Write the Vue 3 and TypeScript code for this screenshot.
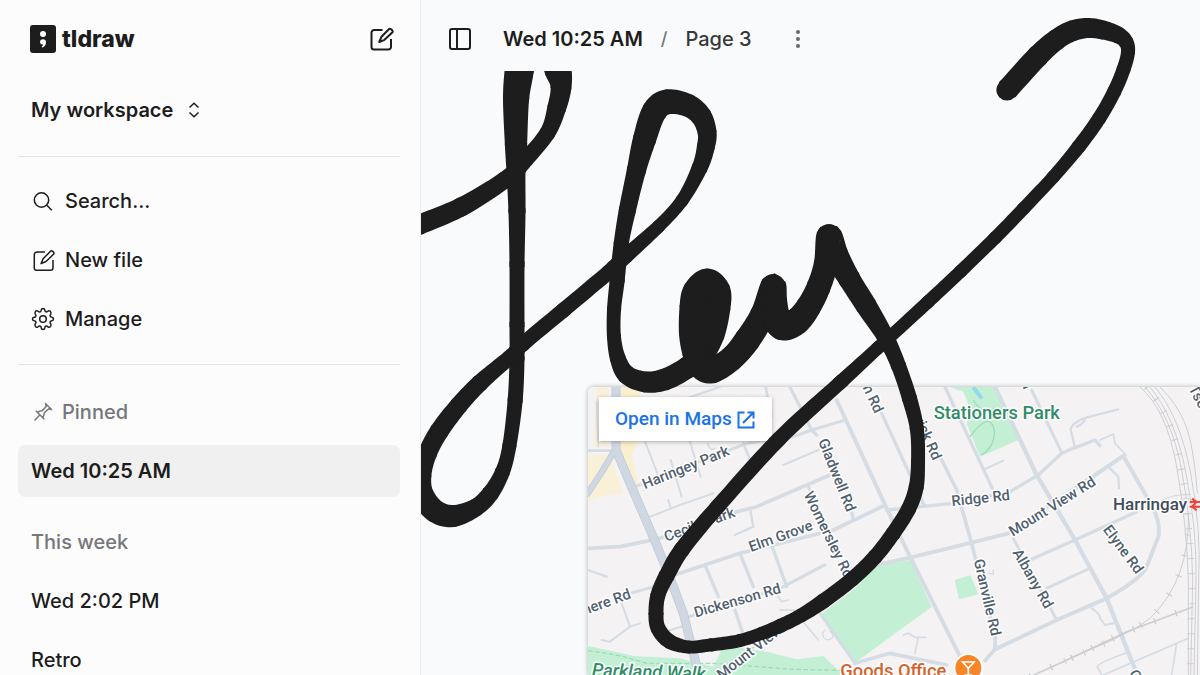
<script setup lang="ts">
type InkPoint = [x: number, y: number, width: number]

interface InkPiece {
  d: string
  x: number
  y: number
  r: number
}

interface Road {
  d: string
  w: number
}

interface StreetLabel {
  text: string
  x: number
  y: number
  angle: number
  anchor?: 'start' | 'middle' | 'end'
}

const recentFiles: string[] = ['Wed 2:02 PM', 'Retro']

const letterH: InkPoint[] = [
  [405, 229, 20], [421, 224, 20], [463, 206, 19], [506, 179, 17], [527, 158, 16], [548, 132, 16],
  [557, 107, 19], [561, 87, 21], [558, 70, 27], [550, 46, 28], [534, 32, 28], [522, 46, 28],
  [519, 72, 29], [516, 100, 26], [516, 147, 22], [516, 172, 19], [517, 213, 17], [517, 267, 15],
  [517, 327, 15], [517, 360, 15], [515, 402, 15], [509, 448, 14], [502, 473, 15], [490, 494, 17],
  [475, 508, 18], [453, 516, 22], [435, 511, 23], [422, 494, 23], [421, 474, 21], [428, 452, 19],
  [440, 430, 19], [460, 404, 18], [481, 382, 17], [510, 357, 15], [524, 343, 15], [566, 308, 15],
  [609, 272, 15],
]

const lettersLey: InkPoint[] = [
  [609, 272, 15], [627, 255, 15], [660, 225, 13], [683, 199, 13], [700, 167, 16], [706, 146, 18],
  [707, 132, 19], [701, 116, 21], [687, 105, 23], [667, 102, 25], [654, 112, 25], [644, 141, 23],
  [636, 172, 19], [627, 212, 17], [621, 245, 15], [617, 282, 15], [614, 310, 14], [614, 337, 14],
  [618, 359, 16], [627, 375, 19], [646, 382, 21], [666, 379, 22], [688, 367, 22], [702, 354, 24],
  [712, 333, 26], [718, 307, 25], [717, 291, 27], [707, 282, 27], [696, 292, 27], [693, 308, 27],
  [693, 333, 28], [696, 353, 27], [702, 367, 26], [713, 370, 26], [732, 358, 25], [748, 339, 26],
  [763, 314, 25], [773, 286, 25], [774, 300, 26], [776, 316, 28], [783, 326, 29], [797, 321, 27],
  [809, 306, 25], [819, 286, 24], [826, 263, 24], [829, 236, 25], [836, 255, 25], [850, 280, 22],
  [867, 307, 21], [886, 338, 17], [899, 367, 15], [910, 400, 15], [917, 430, 14], [918, 463, 14],
  [916, 488, 15], [908, 510, 15], [892, 535, 15], [874, 558, 15], [851, 580, 15], [822, 602, 15],
  [800, 616, 14], [780, 626, 14], [760, 634, 13], [738, 641, 13], [710, 645, 13], [688, 647, 13],
  [669, 641, 15], [658, 628, 15], [656, 613, 15], [658, 595, 15], [667, 575, 16], [683, 548, 16],
  [720, 504, 15], [780, 438, 15], [843, 380, 14], [880, 346, 13], [930, 300, 13], [962, 270, 13],
  [997, 236, 13], [1025, 207, 13], [1055, 175, 13], [1080, 145, 14], [1100, 117, 14], [1115, 90, 14],
  [1124, 68, 14], [1128, 52, 14], [1126, 42, 15], [1118, 35, 17], [1103, 30, 19], [1088, 28, 20],
  [1072, 31, 21], [1056, 40, 21], [1037, 57, 22], [1007, 90, 22],
]

function spline(a: number, b: number, c: number, d: number, t: number): number {
  return (
    0.5 *
    (2 * b + (c - a) * t + (2 * a - 5 * b + 4 * c - d) * t * t + (3 * b - a - 3 * c + d) * t * t * t)
  )
}

// Each piece is the band between two samples, with a disc that rounds its joint.
function inkPieces(points: InkPoint[]): InkPiece[] {
  const steps = 10
  const smooth: InkPoint[] = []
  for (let i = 0; i < points.length - 1; i++) {
    const p0 = points[Math.max(i - 1, 0)]
    const p1 = points[i]
    const p2 = points[i + 1]
    const p3 = points[Math.min(i + 2, points.length - 1)]
    for (let s = 0; s < steps; s++) {
      const t = s / steps
      smooth.push([
        spline(p0[0], p1[0], p2[0], p3[0], t),
        spline(p0[1], p1[1], p2[1], p3[1], t),
        spline(p0[2], p1[2], p2[2], p3[2], t),
      ])
    }
  }
  smooth.push(points[points.length - 1])

  const left: string[] = []
  const right: string[] = []
  smooth.forEach(([x, y, w], i) => {
    const before = smooth[Math.max(i - 1, 0)]
    const after = smooth[Math.min(i + 1, smooth.length - 1)]
    const dx = after[0] - before[0]
    const dy = after[1] - before[1]
    const half = w / 2 / (Math.hypot(dx, dy) || 1)
    left.push(`${(x + dy * half).toFixed(2)} ${(y - dx * half).toFixed(2)}`)
    right.push(`${(x - dy * half).toFixed(2)} ${(y + dx * half).toFixed(2)}`)
  })

  return points.map(([x, y, w], i) => {
    const from = Math.max(i * steps - 1, 0)
    const to = Math.min((i + 1) * steps + 1, smooth.length)
    const band = [...left.slice(from, to), ...right.slice(from, to).reverse()]
    return { d: `M${band.join('L')}Z`, x, y, r: w / 2 - 0.4 }
  })
}

const ink: InkPiece[] = [...inkPieces(letterH), ...inkPieces(lettersLey)]

const roads: Road[] = [
  { d: 'M24 212H92', w: 8 },
  { d: 'M24 505L120 500L240 475L470 395L530 380L750 285', w: 11 },
  { d: 'M205 412L300 375L400 340', w: 6 },
  { d: 'M165 320L500 190L640 170L695 150L790 122', w: 9 },
  { d: 'M195 185L240 300', w: 6 },
  { d: 'M272 240L305 350', w: 6 },
  { d: 'M330 185L362 290', w: 6 },
  { d: 'M265 360L273 387', w: 6 },
  { d: 'M383 190Q390 215 405 205', w: 5 },
  { d: 'M490 190L510 240', w: 8 },
  { d: 'M300 62L420 21', w: 7 },
  { d: 'M50 65L55 200', w: 5 },
  { d: 'M290 583L480 520L760 450L910 378', w: 11 },
  { d: 'M375 555L415 650', w: 10 },
  { d: 'M480 520L520 620', w: 10 },
  { d: 'M575 495L620 620', w: 10 },
  { d: 'M510 385L520 440L465 465', w: 7 },
  { d: 'M150 640L250 612', w: 9 },
  { d: 'M310 715L600 625L735 555', w: 9 },
  { d: 'M125 670L150 740L90 785L65 780M150 740L180 730', w: 6 },
  { d: 'M255 755L310 738', w: 6 },
  { d: 'M465 690L487 755', w: 10 },
  { d: 'M410 890L660 690', w: 8 },
  { d: 'M595 650L605 665L625 660M600 690L640 690L715 780', w: 5 },
  { d: 'M630 21L695 150L710 165', w: 10 },
  { d: 'M557 21L575 110', w: 8 },
  { d: 'M610 255L715 210', w: 7 },
  { d: 'M685 320L700 350M820 415L810 380', w: 10 },
  { d: 'M770 60L920 385L990 530L1140 830', w: 12 },
  { d: 'M1095 21L1237 325', w: 10 },
  { d: 'M920 390L1120 370L1290 335L1375 285L1445 220L1480 205L1545 180L1560 197', w: 10 },
  { d: 'M905 100L990 285L1032 375', w: 10 },
  { d: 'M1070 210L1085 240L1130 330L1175 490L1245 770V808L1215 842', w: 11 },
  { d: 'M890 555L990 533L1175 488L1285 460L1545 285L1630 228L1700 350Q1745 420 1735 470L1700 560Q1680 600 1580 655L1430 720L1245 808', w: 12 },
  { d: 'M1245 21L1370 285L1485 480L1580 655L1670 880', w: 13 },
  { d: 'M1355 30L1445 218', w: 9 },
  { d: 'M1355 538L1485 480L1670 395', w: 10 },
  { d: 'M1400 625L1525 567', w: 9 },
  { d: 'M1300 475L1430 720', w: 9 },
  { d: 'M1485 205Q1480 180 1472 150Q1475 125 1530 110L1615 88M1490 140Q1515 130 1515 115', w: 7 },
  { d: 'M1560 180L1600 162L1605 190L1638 225', w: 5 },
  { d: 'M1590 265L1615 290L1617 325', w: 7 },
  { d: 'M1535 685Q1560 700 1560 715L1575 735L1600 730', w: 6 },
  { d: 'M1215 267L1270 242', w: 6 },
  { d: 'M720 700L825 850', w: 9 },
  { d: 'M825 850L930 820L1100 855', w: 11 },
  { d: 'M970 765L985 760L1005 772H1038M1015 772L1005 820', w: 5 },
  { d: 'M735 750A16 16 0 1 0 760 765L750 752', w: 4 },
  { d: 'M24 570L80 590M620 615L730 555', w: 7 },
  { d: 'M1565 885L1552 860Q1555 848 1640 818M1570 885L1825 775M1790 790L1775 885', w: 5 },
  { d: 'M1225 580L1240 582V570', w: 4 },
  { d: 'M1735 370Q1760 345 1830 343', w: 4 },
]

const streets: StreetLabel[] = [
  { text: 'Haringey Park', x: 317, y: 262, angle: -22 },
  { text: 'Cecile Park', x: 358, y: 433, angle: -20 },
  { text: 'Elm Grove', x: 602, y: 468, angle: -20 },
  { text: 'Dickenson Rd', x: 472, y: 661, angle: -16 },
  { text: 'mere Rd', x: 150, y: 640, angle: -20, anchor: 'end' },
  { text: 'Mount View', x: 508, y: 816, angle: -38 },
  { text: 'Gladwell Rd', x: 771, y: 285, angle: 68 },
  { text: 'Womersley Rd', x: 746, y: 464, angle: 64 },
  { text: 'on Rd', x: 898, y: 96, angle: 65, anchor: 'end' },
  { text: 'Warwick Rd', x: 1072, y: 237, angle: 66, anchor: 'end' },
  { text: 'Ridge Rd', x: 1202, y: 354, angle: -6 },
  { text: 'Mount View Rd', x: 1416, y: 379, angle: -32 },
  { text: 'Albany Rd', x: 1359, y: 596, angle: 60 },
  { text: 'Elyne Rd', x: 1630, y: 508, angle: 53 },
  { text: 'Granville Rd', x: 1222, y: 652, angle: 77 },
  { text: 'Oakfield', x: 1660, y: 872, angle: 64, anchor: 'start' },
  { text: 'rd', x: 1345, y: 24, angle: 66, anchor: 'end' },
  { text: 'Tse', x: 1838, y: 18, angle: 62, anchor: 'start' },
]
</script>

<template>
  <div class="app">
    <aside class="sidebar">
      <header class="brand-row">
        <a class="brand" href="#" aria-label="tldraw">
          <svg class="brand-mark" viewBox="0 0 26 28" aria-hidden="true">
            <rect width="26" height="28" rx="3" fill="#1d1d1d" />
            <circle cx="13" cy="9" r="3" fill="#fcfcfc" />
            <path d="M13 14.2a3 3 0 0 1 3 3c0 2.400-1.300 4.300-3.200 5.200-.8.300-1.300-.5-.8-1.100.7-.7 1-1.300 1.100-1.900A2.700 2.700 0 0 1 10 17.200a3 3 0 0 1 3-3z" fill="#fcfcfc" />
          </svg>
          <span class="brand-name">tldraw</span>
        </a>
        <button class="icon-button" type="button" aria-label="New file">
          <svg class="compose" viewBox="0 0 24 24" aria-hidden="true">
            <path d="M12.500 3H4.200A2.700 2.700 0 0 0 1.500 5.700V20A2.500 2.500 0 0 0 4 22.500H18.500A2.500 2.500 0 0 0 21 20V12" />
            <path d="M9.300 15L11.500 9.700L18.800 2.200Q19.800 1.200 21 2.200L22.200 3.300Q23.200 4.400 22.200 5.500L14.500 12.800Z" />
          </svg>
        </button>
      </header>

      <button class="workspace" type="button">
        My workspace
        <svg viewBox="0 0 12 16" aria-hidden="true"><path d="M1.500 5.500L6 1.200L10.500 5.500M1.500 10.500L6 14.800L10.500 10.500" /></svg>
      </button>

      <nav class="actions" aria-label="Workspace">
        <button class="row" type="button">
          <svg class="row-icon" viewBox="0 0 24 24" aria-hidden="true"><circle cx="10.500" cy="11" r="7.200" /><path d="M15.800 16.300L20.800 21.300" /></svg>
          Search...
        </button>
        <button class="row" type="button">
          <svg class="row-icon" viewBox="0 0 24 24" aria-hidden="true">
            <path d="M14 4H6A2.700 2.700 0 0 0 3.300 6.700V20A2.300 2.300 0 0 0 5.600 22.300H19.700A2.300 2.300 0 0 0 22 20V12" />
            <path d="M10.100 15.600L12.100 10.800L19.500 3.300Q20.500 2.300 21.700 3.300L22.500 4.100Q23.500 5.200 22.500 6.300L15 13.500Z" />
          </svg>
          New file
        </button>
        <button class="row" type="button">
          <svg class="row-icon" viewBox="0 0 24 24" aria-hidden="true">
            <path d="M10.200 3.200Q10.400 1.500 12 1.500T13.800 3.200Q14 5 15.400 4.900Q16.300 4.700 17 4.200Q18.200 3.300 19.300 4.300T19.800 6.900Q18.700 8.200 19.200 9.300Q19.600 10.200 20.800 10.200Q22.500 10.400 22.500 12T20.800 13.800Q19.600 13.900 19.200 14.700Q18.700 15.800 19.800 17.100Q20.400 18.600 19.300 19.700T17 19.800Q15.700 18.700 14.700 19.200Q13.900 19.600 13.800 20.800Q13.600 22.500 12 22.500T10.200 20.800Q10.100 19.600 9.300 19.200Q8.300 18.700 7 19.800Q5.600 20.700 4.600 19.700T4.200 17.100Q5.300 15.800 4.800 14.700Q4.400 13.900 3.200 13.800Q1.500 13.600 1.500 12T3.200 10.200Q4.400 10.100 4.800 9.300Q5.300 8.200 4.200 6.900Q3.600 5.300 4.600 4.300T7 4.200Q8.300 5.300 9.300 4.800Q10.100 4.400 10.200 3.200Z" />
            <circle cx="12" cy="12" r="3.300" />
          </svg>
          Manage
        </button>
      </nav>

      <section class="files" aria-label="Files">
        <h2 class="row heading pinned">
          <svg class="pin" viewBox="0 0 20 20" aria-hidden="true">
            <path d="M1.500 18.500L6.500 13.300M2.800 8.700L11.300 17.200M4.800 10Q7.800 8.800 9.200 8.800L13.300 4.200Q13 2.800 12.200 1.200L18.800 7.800Q17 7.200 15.800 6.800L11.200 10.900Q11.200 12.400 10 15.200" />
          </svg>
          Pinned
        </h2>
        <a class="row file current" href="#" aria-current="page">Wed 10:25 AM</a>
        <h2 class="row heading week">This week</h2>
        <a v-for="file in recentFiles" :key="file" class="row file" href="#">{{ file }}</a>
      </section>
    </aside>

    <main class="editor">
      <div class="map-card">
        <svg class="map" viewBox="24 21 1836 864" preserveAspectRatio="xMinYMin slice" role="img" aria-label="Street map">
          <rect x="24" y="21" width="3000" height="3000" fill="#f4f2f3" />
          <g fill="#faf0cf">
            <path d="M24 225H90L130 340L60 350L24 365Z" opacity=".8" />
            <path d="M50 21H85V200H40Z" opacity=".7" />
            <path d="M125 21H180L170 190L155 230L180 330L150 310L115 230Z" />
          </g>
          <g fill="#c3f0d5">
            <path d="M1110 21H1240L1315 180L1200 230L1160 130L1175 100L1150 35Z" />
            <path d="M885 560L990 540L1055 680L825 848L720 705L830 620Z" />
            <path d="M1124 600L1172 586L1195 643L1137 658Z" />
            <path d="M24 798L120 818L160 828L300 835L400 860L430 800L490 805L560 815L620 830L650 838L730 828L790 885H24Z" />
          </g>
          <g fill="none" stroke="#9edbb8" stroke-width="4">
            <path d="M1170 170Q1230 90 1243 150Q1245 200 1205 225M1180 60Q1200 100 1245 85" />
            <path d="M24 812Q100 822 130 830T200 850L400 850L640 868L820 872" stroke-dasharray="14 7" />
          </g>
          <path d="M1180 22L1205 55" stroke="#90daee" stroke-width="12" />

          <g fill="none" stroke="#d5dce3" stroke-linejoin="round" stroke-linecap="round">
            <path v-for="road in roads" :key="road.d" :d="road.d" :stroke-width="road.w" />
          </g>
          <g fill="none" stroke-linejoin="round">
            <path d="M108 0V210L150 310L215 460L265 580L310 700L350 860" stroke="#bcc8d4" stroke-width="27" />
            <path d="M102 215L60 285L20 345" stroke="#bcc8d4" stroke-width="19" />
            <path d="M108 0V210L150 310L215 460L265 580L310 700L350 860" stroke="#cfd8e2" stroke-width="23" />
            <path d="M102 215L60 285L20 345" stroke="#cfd8e2" stroke-width="15" />
          </g>

          <g fill="none" stroke="#cdced2" stroke-width="3">
            <path d="M1680 21Q1760 90 1790 260T1825 600L1825 885" />
            <path d="M1695 21Q1775 110 1805 270T1838 600L1832 885" />
            <path d="M1710 21Q1785 110 1818 280T1848 600L1842 885" />
            <path d="M1725 21Q1800 110 1832 280T1856 600L1852 885" />
            <path d="M1740 21Q1790 70 1815 130T1852 340" />
            <path d="M1825 400Q1830 600 1710 715Q1660 755 1540 805L1440 850" />
            <path d="M1350 890L1440 850L1640 755L1840 680" stroke-width="5" />
          </g>
          <g fill="none" stroke="#cdced2" stroke-width="20">
            <path d="M1700 21Q1780 110 1805 270T1835 600L1830 885" stroke-dasharray="3 42" />
            <path d="M1825 400Q1830 600 1710 715Q1660 755 1540 805L1440 850" stroke-dasharray="3 60" />
            <path d="M1350 890L1440 850L1640 755L1840 680" stroke-dasharray="4 64" />
          </g>

          <g class="street">
            <text
              v-for="label in streets"
              :key="label.text + label.x"
              :transform="`translate(${label.x} ${label.y}) rotate(${label.angle})`"
              :text-anchor="label.anchor ?? 'middle'"
              dy="15"
            >{{ label.text }}</text>
          </g>
          <g class="place">
            <text x="1061" y="117" class="park">Stationers Park</text>
            <text x="35" y="888" class="park trail" transform="rotate(2 35 888)">Parkland Walk</text>
            <text x="1599" y="389" class="station">Harringay</text>
            <text x="781" y="892" class="venue">Goods Office</text>
          </g>
          <path d="M1829 366H1862M1829 380H1862M1836 356L1850 366L1836 380L1850 391" fill="none" stroke="#f0433a" stroke-width="6" />
          <circle cx="1165" cy="864" r="44" fill="#fff" />
          <circle cx="1165" cy="864" r="39" fill="#f98529" />
          <path d="M1148 846H1182L1165 865ZM1165 865V885M1153 885H1177" fill="none" stroke="#fff" stroke-width="5" />
        </svg>
        <a class="open-maps" href="#">
          Open in Maps
          <svg viewBox="0 0 18 18" aria-hidden="true"><path d="M7.500 1.500H1.500V16.500H16.500V10.500M10.500 1.500H16.500V7.500M16.500 1.500L6 12" /></svg>
        </a>
      </div>

      <svg class="ink" viewBox="421 0 779 675" preserveAspectRatio="xMinYMin slice" role="img" aria-label="Handwritten Hey">
        <g v-for="(piece, i) in ink" :key="i">
          <path :d="piece.d" />
          <circle :cx="piece.x" :cy="piece.y" :r="piece.r" />
        </g>
      </svg>

      <header class="toolbar">
        <button class="icon-button" type="button" aria-label="Toggle sidebar">
          <svg class="panel" viewBox="0 0 22 22" aria-hidden="true"><rect x="1" y="1" width="20" height="20" rx="2" /><path d="M8 1V21" /></svg>
        </button>
        <button class="file-name" type="button">Wed 10:25 AM</button>
        <span class="slash">/</span>
        <button class="page-name" type="button">Page 3</button>
        <button class="icon-button more" type="button" aria-label="More">
          <svg class="dots" viewBox="0 0 6 20" aria-hidden="true"><circle cx="3" cy="3" r="2" /><circle cx="3" cy="10" r="2" /><circle cx="3" cy="17" r="2" /></svg>
        </button>
      </header>
    </main>
  </div>
</template>

<style>
body {
  margin: 0;
}
</style>

<style scoped>
.app {
  display: flex;
  height: 100vh;
  overflow: hidden;
  font-family: Inter, "Liberation Sans", sans-serif;
  font-size: 20px;
  font-weight: 500;
  line-height: 24px;
  color: #1d1d1d;
}

button {
  border: 0;
  padding: 0;
  background: none;
  font: inherit;
  color: inherit;
  text-align: left;
  white-space: nowrap;
}

a {
  color: inherit;
  text-decoration: none;
}

svg {
  display: block;
  flex: none;
}

.sidebar {
  box-sizing: border-box;
  flex: none;
  width: 421px;
  padding: 0 20px 0 18px;
  border-right: 1px solid #ebebec;
  background: #fcfcfc;
  overflow: hidden;
}

.brand-row {
  display: flex;
  align-items: center;
  justify-content: space-between;
  height: 77px;
  padding: 0 6px 0 12px;
}

.brand {
  display: flex;
  align-items: center;
  gap: 6px;
}

.brand-mark {
  width: 26px;
  height: 28px;
}

.brand-name {
  font-size: 23px;
  font-weight: 800;
}

.icon-button {
  display: flex;
  align-items: center;
  justify-content: center;
}

.compose {
  width: 24px;
  height: 24px;
  fill: none;
  stroke: #1d1d1d;
  stroke-width: 2;
  stroke-linejoin: round;
}

.workspace {
  display: flex;
  align-items: center;
  gap: 15px;
  width: 100%;
  height: 79px;
  padding: 0 13px 14px;
  box-sizing: border-box;
  font-weight: 600;
}

.workspace svg {
  width: 12px;
  height: 16px;
  fill: none;
  stroke: #1d1d1d;
  stroke-width: 1.5;
}

.actions {
  display: flex;
  flex-direction: column;
  gap: 7px;
  padding: 18px 0 19px;
  border-top: 1px solid #e4e4e5;
  border-bottom: 1px solid #e4e4e5;
}

.row {
  display: flex;
  align-items: center;
  box-sizing: border-box;
  width: 100%;
  height: 52px;
  margin: 0;
  padding: 0 13px;
  gap: 10px;
  font-size: 20px;
  font-weight: 500;
}

.row-icon {
  width: 24px;
  height: 24px;
  fill: none;
  stroke: #1d1d1d;
  stroke-width: 1.5;
  stroke-linejoin: round;
}

.files {
  display: flex;
  flex-direction: column;
  gap: 7px;
  padding-top: 21px;
}

.heading {
  color: #75777a;
}

.pinned {
  gap: 9px;
  padding-left: 15px;
}

.pin {
  width: 20px;
  height: 20px;
  fill: none;
  stroke: #75777a;
  stroke-width: 1.5;
}

.week {
  margin-top: 12px;
}

.current {
  border-radius: 7px;
  background: #f0f0f0;
  font-weight: 600;
}

.editor {
  position: relative;
  flex: 1;
  min-width: 0;
  overflow: hidden;
  background: #f9fafc;
}

.toolbar {
  position: relative;
  display: inline-flex;
  align-items: center;
  height: 71px;
  padding: 0 28px;
  box-sizing: border-box;
  background: #f9fafc;
}

.toolbar > * {
  margin-top: 6px;
}

.panel {
  width: 22px;
  height: 22px;
  fill: none;
  stroke: #1d1d1d;
  stroke-width: 2;
}

.file-name {
  margin-left: 32px;
  font-weight: 600;
}

.slash {
  margin: 6px 18px 0;
  font-size: 18px;
  color: #75777a;
}

.page-name {
  color: #38393b;
}

.more {
  margin-left: 43px;
}

.dots {
  width: 6px;
  height: 20px;
  fill: #66686b;
}

.ink {
  position: absolute;
  inset: 0;
  width: 100%;
  height: 100%;
  pointer-events: none;
  fill: #1d1d1d;
}

.map-card {
  position: absolute;
  top: 387px;
  right: 0;
  bottom: 0;
  left: 167px;
  border-radius: 6px 0 0 0;
  box-shadow: 0 0 5px rgba(0, 0, 0, 0.3);
}

.map {
  width: 100%;
  height: 100%;
  border-radius: 6px 0 0 0;
  font-family: Roboto, "Liberation Sans", sans-serif;
  font-weight: 500;
}

.map text {
  paint-order: stroke;
  stroke: #fff;
  stroke-width: 9px;
  stroke-linejoin: round;
}

.street {
  font-size: 44px;
  fill: #50606f;
}

.place {
  font-size: 55px;
}

.park {
  fill: #2f8c66;
}

.trail {
  font-style: italic;
}

.station {
  fill: #3e4c5c;
  font-size: 51px;
}

.venue {
  fill: #d4622c;
}

.open-maps {
  position: absolute;
  top: 10px;
  left: 11px;
  display: flex;
  align-items: center;
  gap: 5px;
  box-sizing: border-box;
  height: 44px;
  padding: 0 17px 1px 16px;
  background: #fff;
  box-shadow: 0 1px 4px rgba(0, 0, 0, 0.3);
  color: #1a73e8;
  font-family: Roboto, "Liberation Sans", sans-serif;
  font-size: 19px;
  font-weight: 500;
  white-space: nowrap;
}

.open-maps svg {
  width: 18px;
  height: 18px;
  margin-top: 3px;
  fill: none;
  stroke: #1a73e8;
  stroke-width: 2;
}
</style>
